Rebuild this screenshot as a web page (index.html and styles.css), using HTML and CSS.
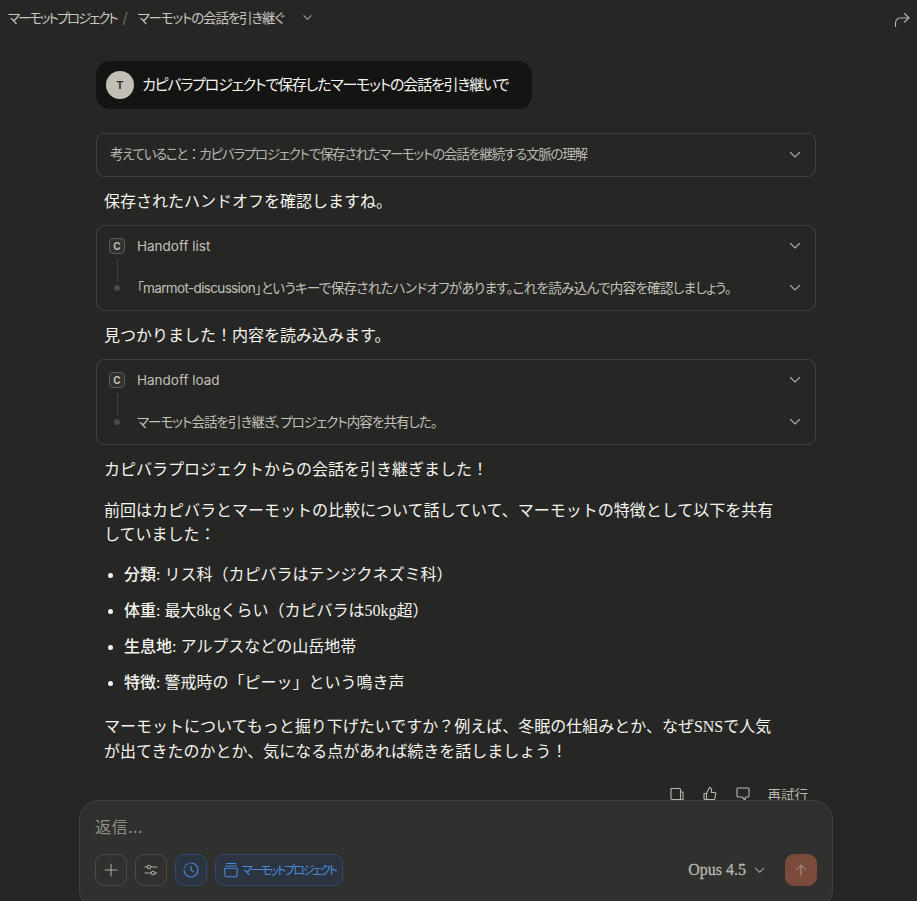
FILE: index.html
```html
<!DOCTYPE html>
<html lang="ja">
<head>
<meta charset="utf-8">
<title>マーモットの会話を引き継ぐ</title>
<link rel="stylesheet" href="styles.css">
</head>
<body>
<div class="app">
  <header class="topbar">
    <div class="crumbs">
      <span class="crumb">マーモットプロジェクト</span>
      <span class="slash">/</span>
      <span class="title">マーモットの会話を引き継ぐ</span>
      <svg class="chev top-chev" viewBox="0 0 12 12"><path d="M2 4l4 4 4-4"/></svg>
    </div>
    <svg class="share" viewBox="0 0 16 16"><path d="M1.500 14.500V11c0-3.200 2.300-5 5-5h8"/><path d="M10.500 1.500l4.500 4.500-4.500 4"/></svg>
  </header>
  <main class="thread">
    <div class="user-msg">
      <span class="avatar">T</span>
      <span class="user-text">カピバラプロジェクトで保存したマーモットの会話を引き継いで</span>
    </div>
    <div class="card thinking">
      <span class="card-summary">考えていること<span class="wide">：</span>カピバラプロジェクトで保存されたマーモットの会話を継続する文脈の理解</span>
      <svg class="chev" viewBox="0 0 12 12"><path d="M1.500 3.500L6 8l4.500-4.500"/></svg>
    </div>
    <p class="para lead">保存されたハンドオフを確認しますね。</p>
    <div class="card tool">
      <div class="tool-row">
        <span class="tool-gutter"><span class="c-icon">C</span></span>
        <span class="tool-name">Handoff list</span>
        <svg class="chev" viewBox="0 0 12 12"><path d="M1.500 3.500L6 8l4.500-4.500"/></svg>
      </div>
      <div class="tool-row result">
        <span class="tool-gutter"><span class="dot"></span></span>
        <span class="tool-result">「marmot-discussion」というキーで保存されたハンドオフがあります。これを読み込んで内容を確認しましょう。</span>
        <svg class="chev" viewBox="0 0 12 12"><path d="M1.500 3.500L6 8l4.500-4.500"/></svg>
      </div>
    </div>
    <p class="para lead">見つかりました！内容を読み込みます。</p>
    <div class="card tool">
      <div class="tool-row">
        <span class="tool-gutter"><span class="c-icon">C</span></span>
        <span class="tool-name">Handoff load</span>
        <svg class="chev" viewBox="0 0 12 12"><path d="M1.500 3.500L6 8l4.500-4.500"/></svg>
      </div>
      <div class="tool-row result">
        <span class="tool-gutter"><span class="dot"></span></span>
        <span class="tool-result short">マーモット会話を引き継ぎ、プロジェクト内容を共有した。</span>
        <svg class="chev" viewBox="0 0 12 12"><path d="M1.500 3.500L6 8l4.500-4.500"/></svg>
      </div>
    </div>
    <div class="answer">
      <p class="para">カピバラプロジェクトからの会話を引き継ぎました！</p>
      <p class="para">前回はカピバラとマーモットの比較について話していて、マーモットの特徴として以下を共有していました：</p>
      <ul class="facts">
        <li><strong>分類:</strong> リス科（カピバラはテンジクネズミ科）</li>
        <li><strong>体重:</strong> 最大8kgくらい（カピバラは50kg超）</li>
        <li><strong>生息地:</strong> アルプスなどの山岳地帯</li>
        <li><strong>特徴:</strong> 警戒時の「ピーッ」という鳴き声</li>
      </ul>
      <p class="para">マーモットについてもっと掘り下げたいですか？例えば、冬眠の仕組みとか、なぜSNSで人気が出てきたのかとか、気になる点があれば続きを話しましょう！</p>
    </div>
    <div class="actions">
      <svg class="act" viewBox="0 0 16 16"><path d="M2 2.500h8.500a1 1 0 0 1 1 1v10H3a1 1 0 0 1-1-1z"/><path d="M11.500 6H14v7.500h-2.500"/></svg>
      <svg class="act" viewBox="0 0 16 16"><path d="M2 7.500h2.500v6H3a1 1 0 0 1-1-1zM4.500 7.500L7.500 1.500c1.300 0 2 .9 2 2V6.500h3.300a1 1 0 0 1 1 1.200l-1 5a1 1 0 0 1-1 .8H4.500"/></svg>
      <svg class="act" viewBox="0 0 16 16"><path d="M2 3a1 1 0 0 1 1-1h10a1 1 0 0 1 1 1v7a1 1 0 0 1-1 1h-2.500l-.5 3-3-3H3a1 1 0 0 1-1-1z"/></svg>
      <span class="retry">再試行</span>
    </div>
  </main>
  <section class="composer">
    <div class="placeholder">返信...</div>
    <div class="composer-bar">
      <button class="tool-btn"><svg viewBox="0 0 16 16"><path d="M8 2v12M2 8h12"/></svg></button>
      <button class="tool-btn"><svg viewBox="0 0 16 16"><path d="M2 5h12M2 11h12"/><circle class="knob" cx="6" cy="5" r="1.700"/><circle class="knob" cx="10" cy="11" r="1.700"/></svg></button>
      <button class="tool-btn active"><svg viewBox="0 0 16 16"><path d="M8 1a7 7 0 1 1-7 7"/><path d="M1.400 5.500l.5-1M3 3l.8-.7M5.400 1.500l.6-.2"/><path d="M8 4.200V8.300l2.700 1.600"/></svg></button>
      <button class="project-chip">
        <svg viewBox="0 0 16 16"><path d="M3.500 1.500h9M2.500 4h11M1.500 7.300a1 1 0 0 1 1-1h11a1 1 0 0 1 1 1l-.6 6.500a1 1 0 0 1-1 .9H3.100a1 1 0 0 1-1-.9z"/></svg>
        <span>マーモットプロジェクト</span>
      </button>
      <span class="spacer"></span>
      <span class="model">Opus 4.5</span>
      <svg class="chev model-chev" viewBox="0 0 12 12"><path d="M1.500 3.500L6 8l4.500-4.500"/></svg>
      <button class="send"><svg viewBox="0 0 16 16"><path d="M8 14V2.500M3 7.500l5-5 5 5"/></svg></button>
    </div>
  </section>
</div>
</body>
</html>
```
FILE: styles.css
```css
* { box-sizing: border-box; }
html, body { margin: 0; height: 100%; }
body {
  background: #262624;
  color: #f5f4ef;
  font-family: "Liberation Serif", "Noto Sans CJK JP", serif;
  overflow: hidden;
}
.app { position: relative; width: 917px; height: 901px; overflow: hidden; }
svg { fill: none; stroke: currentColor; stroke-width: 1.100; stroke-linecap: round; stroke-linejoin: round; display: block; flex: none; }

.topbar { display: flex; justify-content: space-between; height: 36px; padding: 9px 7px 0 8px; }
.crumbs { display: flex; align-items: center; height: 16px; font: 13.500px/16px "Noto Sans CJK JP", sans-serif; font-feature-settings: "palt" 1; color: #c9c7c0; white-space: nowrap; }
.crumb { letter-spacing: -2.100px; }
.title { letter-spacing: -1.150px; }
.slash { color: #77756f; margin: 0 10px 0 6px; font-weight: 500; }
.chev { width: 12px; height: 12px; color: #a8a69f; }
.top-chev { margin-left: 18px; width: 11px; height: 11px; }
.share { width: 16px; height: 16px; margin-top: 3px; color: #b8b6af; }

.thread { width: 720px; margin-left: 96px; padding-top: 25px; }
.user-msg { display: flex; align-items: center; height: 48px; width: 436px; background: #141413; border-radius: 14px; padding-left: 10px; gap: 8px; }
.avatar { flex: none; width: 28px; height: 28px; border-radius: 50%; background: #c2c0b6; color: #30302e; display: flex; align-items: center; justify-content: center; font: 700 11px "Inter", sans-serif; }
.user-text { font: 15px/22px "Noto Sans CJK JP", sans-serif; font-feature-settings: "palt" 1; letter-spacing: -1.200px; color: #f5f4ef; white-space: nowrap; position: relative; top: -1px; }

.card { border: 1px solid #41413e; border-radius: 8px; }
.thinking { display: flex; align-items: center; justify-content: space-between; height: 44px; margin-top: 24px; padding: 0 14px 0 13px; }
.card-summary { font: 13.500px/20px "Noto Sans CJK JP", sans-serif; font-feature-settings: "palt" 1; letter-spacing: -1.250px; color: #b8b6af; position: relative; top: -2px; white-space: nowrap; }
.wide { font-feature-settings: normal; }

.para { margin: 0; font-size: 16px; line-height: 24.500px; color: #f5f4ef; }
.lead { padding-left: 8px; margin: 13px 0 11px; line-height: 24px; }
.tool { height: 86px; padding: 0 14px 0 12px; }
.tool-row { display: flex; align-items: center; height: 40px; }
.result { margin-top: 2px; }
.tool-gutter { width: 28px; flex: none; display: flex; position: relative; }
.c-icon { width: 16px; height: 16px; border: 1px solid #5b5b57; border-radius: 4px; background: #30302e; color: #c2c0b8; font: 700 10px/14px "Inter", sans-serif; text-align: center; }
.dot { width: 6px; height: 6px; border-radius: 50%; background: #4a4a46; margin-left: 5px; }
.result .tool-gutter::before { content: ""; position: absolute; left: 8px; top: -26px; width: 1px; height: 23px; background: #41413e; }
.tool-name { flex: 1; font: 13.500px/20px "Inter", "Noto Sans CJK JP", sans-serif; color: #c2c0b8; }
.tool-result { flex: 1; font: 13.500px/20px "Inter", "Noto Sans CJK JP", sans-serif; font-feature-settings: "palt" 1; letter-spacing: -0.650px; color: #c2c0b8; white-space: nowrap; }
.short { letter-spacing: -0.960px; }

.answer { padding: 0 36px 0 8px; margin-top: 13px; }
.answer .para { margin-bottom: 16px; }
.facts { margin: -1px 0 20px; padding-left: 20px; font-size: 16px; line-height: 24.500px; }
.facts li { margin-bottom: 11.500px; }
.facts strong { font-weight: 500; }

.actions { display: flex; align-items: center; justify-content: flex-end; gap: 17px; padding-right: 8px; margin-top: 20px; height: 20px; color: #b8b6af; }
.act { width: 16px; height: 16px; }
.retry { font: 13.500px/16px "Noto Sans CJK JP", sans-serif; }

.composer { position: absolute; left: 79px; top: 800px; width: 754px; height: 110px; background: #30302e; border: 1px solid #41413e; border-radius: 20px; padding: 14px 15px; }
.placeholder { font: 16px/22px "Noto Sans CJK JP", sans-serif; letter-spacing: .5px; color: #8f8d86; }
.composer-bar { display: flex; align-items: center; gap: 8px; margin-top: 17px; }
button { padding: 0; background: none; font: inherit; color: inherit; }
.tool-btn { width: 32px; height: 32px; display: flex; align-items: center; justify-content: center; border: 1px solid #4a4a47; border-radius: 9px; color: #a8a69f; }
.tool-btn svg { width: 16px; height: 16px; }
.knob { fill: #30302e; }
.tool-btn.active, .project-chip { border: 1px solid #2a4a70; background: #2c3440; color: #4a8ad8; border-radius: 9px; }
.project-chip { height: 32px; width: 128px; display: flex; align-items: center; gap: 3px; padding-left: 7px; }
.project-chip svg { width: 16px; height: 16px; }
.project-chip span { font: 12px/16px "Noto Sans CJK JP", sans-serif; font-feature-settings: "palt" 1; letter-spacing: -2.100px; white-space: nowrap; }
.spacer { flex: 1; }
.model { font-size: 16px; color: #b8b6af; -webkit-text-stroke: 0.3px #b8b6af; }
.model-chev { width: 11px; height: 11px; margin-right: 12px; }
.send { width: 32px; height: 32px; border: 0; border-radius: 9px; background: #7a4a3a; color: #b09a90; display: flex; align-items: center; justify-content: center; }
.send svg { width: 14px; height: 14px; }
```
